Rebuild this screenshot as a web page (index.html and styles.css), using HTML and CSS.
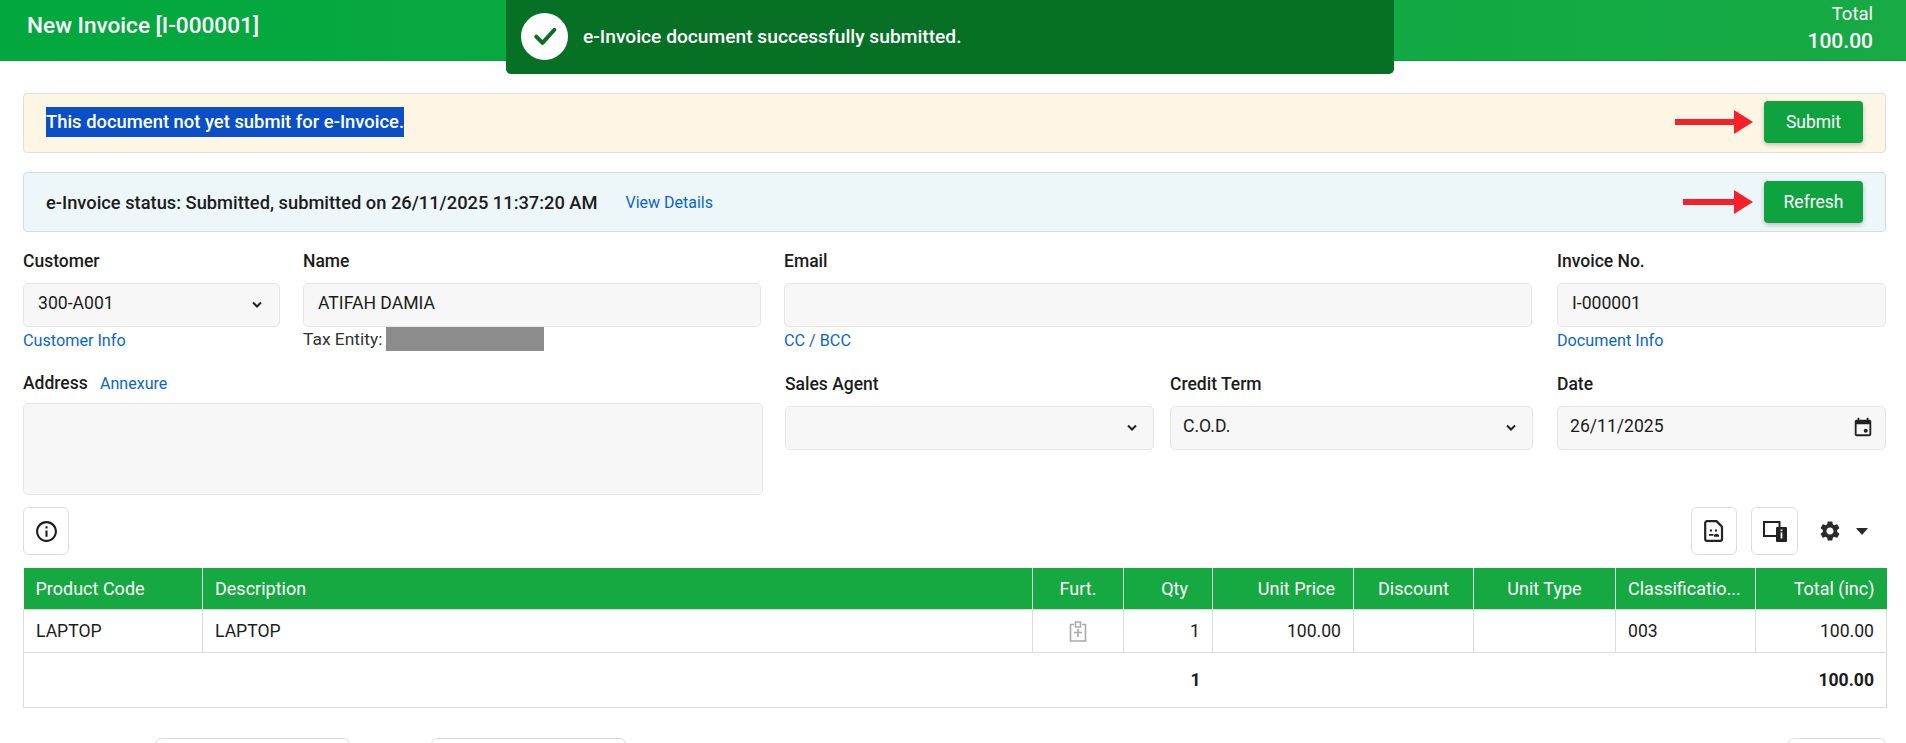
FILE: index.html
```html
<!DOCTYPE html>
<html lang="en">
<head>
  <meta charset="UTF-8">
  <meta name="viewport" content="width=device-width, initial-scale=1.0">
  <title>New Invoice</title>
  <link rel="stylesheet" href="styles.css">
</head>
<body>
  <header class="topbar">
    <h1>New Invoice [I-000001]</h1>
    <div class="topbar-total">
      <span>Total</span>
      <strong>100.00</strong>
    </div>
  </header>

  <div class="toast">
    <span class="toast-icon">
      <svg viewBox="0 0 24 24" width="30" height="30"><path d="M5 12.5l5 5L19.5 7" fill="none" stroke="#0a6f24" stroke-width="3.2" stroke-linecap="round" stroke-linejoin="round"/></svg>
    </span>
    <span>e-Invoice document successfully submitted.</span>
  </div>

  <div class="main-content">
    <div class="notice notice-warn">
      <span class="selected">This document not yet submit for e-Invoice.</span>
      <div class="notice-action action-up">
        <svg class="arrow arrow-long" viewBox="0 0 78 26"><path d="M0 10h59V1l19 12-19 12v-9H0z" fill="#f5202a"/></svg>
        <button class="btn" type="button">Submit</button>
      </div>
    </div>

    <div class="notice notice-info">
      <div class="status">
        <span>e-Invoice status: Submitted, submitted on 26/11/2025 11:37:20 AM</span>
        <a href="#" class="link">View Details</a>
      </div>
      <div class="notice-action">
        <svg class="arrow arrow-short" viewBox="0 0 70 26"><path d="M0 10h51V1l19 12-19 12v-9H0z" fill="#f5202a"/></svg>
        <button class="btn" type="button">Refresh</button>
      </div>
    </div>

    <form class="invoice-form">
      <div class="form-row form-row-top">
        <div class="field w-customer">
          <label>Customer</label>
          <div class="control">300-A001
            <svg class="chev chev-first" viewBox="0 0 12 8"><path d="M2 1.5l4 4 4-4" fill="none" stroke="#222" stroke-width="2"/></svg>
          </div>
          <a href="#" class="link under">Customer Info</a>
        </div>
        <div class="field w-name">
          <label>Name</label>
          <div class="control">ATIFAH DAMIA</div>
          <div class="under tax">Tax Entity:<span class="redacted"></span></div>
        </div>
        <div class="field w-email">
          <label>Email</label>
          <div class="control"></div>
          <a href="#" class="link under">CC / BCC</a>
        </div>
        <div class="field w-invoice">
          <label>Invoice No.</label>
          <div class="control">I-000001</div>
          <a href="#" class="link under">Document Info</a>
        </div>
      </div>

      <div class="form-row form-row-bottom">
        <div class="field w-address">
          <label class="address-label">Address <a href="#" class="link annexure">Annexure</a></label>
          <div class="control textarea"></div>
        </div>
        <div class="field w-agent">
          <label>Sales Agent</label>
          <div class="control tight">
            <svg class="chev" viewBox="0 0 12 8"><path d="M2 1.5l4 4 4-4" fill="none" stroke="#222" stroke-width="2"/></svg>
          </div>
        </div>
        <div class="field w-term">
          <label>Credit Term</label>
          <div class="control tight">C.O.D.
            <svg class="chev" viewBox="0 0 12 8"><path d="M2 1.5l4 4 4-4" fill="none" stroke="#222" stroke-width="2"/></svg>
          </div>
        </div>
        <div class="field w-invoice">
          <label>Date</label>
          <div class="control tight">26/11/2025
            <svg class="cal" viewBox="0 0 24 24"><path d="M19 4h-1V2h-2v2H8V2H6v2H5c-1.1 0-2 .9-2 2v14c0 1.1.9 2 2 2h14c1.1 0 2-.9 2-2V6c0-1.1-.9-2-2-2zm0 16H5V9h14v11z" fill="#222"/><circle cx="15" cy="16" r="2.2" fill="#222"/></svg>
          </div>
        </div>
      </div>
    </form>

    <div class="toolbar">
      <button class="icon-btn" type="button">
        <svg viewBox="0 0 24 24" width="25" height="25"><path d="M11 7h2v2h-2zm0 4h2v6h-2zm1-9C6.48 2 2 6.48 2 12s4.48 10 10 10 10-4.48 10-10S17.52 2 12 2zm0 18c-4.41 0-8-3.59-8-8s3.59-8 8-8 8 3.59 8 8-3.59 8-8 8z" fill="#1c1c1c"/></svg>
      </button>
      <div class="toolbar-right">
        <button class="icon-btn" type="button">
          <svg viewBox="0 0 20 22" width="20" height="22"><path d="M3 1.2h9.5L18 6.7V19a1.8 1.8 0 0 1-1.8 1.8H3A1.8 1.8 0 0 1 1.2 19V3A1.8 1.8 0 0 1 3 1.2z" fill="none" stroke="#222" stroke-width="2.2"/><path d="M6 9.5h2v2H6zM11 9.5h2v2h-2zM5 14h4.5v1.8H5zM10 15c1.5-1.6 3-1.6 5 0v1.8h-5z" fill="#222"/></svg>
        </button>
        <button class="icon-btn icon-btn-wide" type="button">
          <svg viewBox="0 0 24 21" width="24" height="21"><path d="M1 1h15.5v14H1z" fill="none" stroke="#222" stroke-width="2"/><path d="M13 6h11v15H13z" fill="#fff"/><path d="M14 6h9a1 1 0 0 1 1 1v13a1 1 0 0 1-1 1h-9a1 1 0 0 1-1-1V7a1 1 0 0 1 1-1z" fill="#222"/><path d="M17.6 8.5h1.8v1.8h-1.8zM17.6 11.5h1.8v6h-1.8z" fill="#fff"/></svg>
        </button>
        <div class="settings">
          <svg viewBox="0 0 24 24" width="24" height="24"><path d="M19.14 12.94c.04-.3.06-.61.06-.94 0-.32-.02-.64-.07-.94l2.03-1.58c.18-.14.23-.41.12-.61l-1.92-3.32c-.12-.22-.37-.29-.59-.22l-2.39.96c-.5-.38-1.03-.7-1.62-.94l-.36-2.54c-.04-.24-.24-.41-.48-.41h-3.84c-.24 0-.43.17-.47.41l-.36 2.54c-.59.24-1.13.57-1.62.94l-2.39-.96c-.22-.08-.47 0-.59.22L2.74 8.87c-.12.21-.08.47.12.61l2.03 1.58c-.05.3-.09.63-.09.94s.02.64.07.94l-2.03 1.58c-.18.14-.23.41-.12.61l1.92 3.32c.12.22.37.29.59.22l2.39-.96c.5.38 1.03.7 1.62.94l.36 2.54c.05.24.24.41.48.41h3.84c.24 0 .44-.17.47-.41l.36-2.54c.59-.24 1.13-.56 1.62-.94l2.39.96c.22.08.47 0 .59-.22l1.92-3.32c.12-.22.07-.47-.12-.61l-2.01-1.58zM12 15.6c-1.98 0-3.6-1.62-3.6-3.6s1.62-3.6 3.6-3.6 3.6 1.62 3.6 3.6-1.62 3.6-3.6 3.6z" fill="#2a2a2a"/></svg>
          <span class="caret"></span>
        </div>
      </div>
    </div>

    <table class="items">
      <colgroup>
        <col class="c-code"><col class="c-desc"><col class="c-furt"><col class="c-qty"><col class="c-price"><col class="c-disc"><col class="c-type"><col class="c-class"><col class="c-total">
      </colgroup>
      <thead>
        <tr>
          <th>Product Code</th>
          <th>Description</th>
          <th class="mid">Furt.</th>
          <th class="num th-qty">Qty</th>
          <th class="num th-price">Unit Price</th>
          <th class="mid">Discount</th>
          <th class="mid">Unit Type</th>
          <th>Classificatio...</th>
          <th class="num">Total (inc)</th>
        </tr>
      </thead>
      <tbody>
        <tr>
          <td>LAPTOP</td>
          <td>LAPTOP</td>
          <td class="mid">
            <svg class="furt-icon" viewBox="0 0 24 24" width="24" height="24"><path d="M8 4.5H4.5V21h15V4.5H16" fill="none" stroke="#aaa" stroke-width="1.6"/><path d="M9.5 2h5v5h-5zM12 9v8M8 12.5h8" fill="none" stroke="#aaa" stroke-width="1.6"/></svg>
          </td>
          <td class="num">1</td>
          <td class="num">100.00</td>
          <td></td>
          <td></td>
          <td>003</td>
          <td class="num">100.00</td>
        </tr>
      </tbody>
      <tfoot>
        <tr>
          <td colspan="3"></td>
          <td class="num">1</td>
          <td colspan="4"></td>
          <td class="num">100.00</td>
        </tr>
      </tfoot>
    </table>

    <div class="footer-buttons">
      <button class="foot-btn foot-a" type="button"></button>
      <button class="foot-btn foot-b" type="button"></button>
      <button class="foot-btn foot-c" type="button"></button>
    </div>
  </div>
</body>
</html>
```

FILE: styles.css
```css
html, body {
  height: 100%;
  overflow: hidden;
}
body {
  font-family: Roboto, "Liberation Sans", sans-serif;
  font-size: 17px;
  margin: 0;
  padding: 0;
  color: #1c1c1c;
  background: #fff;
}
a {
  text-decoration: none;
}
.link {
  color: #0a66c8;
  font-size: 16px;
  font-weight: 400;
}

.topbar {
  height: 61px;
  box-sizing: border-box;
  display: flex;
  justify-content: space-between;
  padding: 0 33px 0 27px;
  color: white;
  background: linear-gradient(90deg, #02a83e, #17aa45);
  border-bottom: 1px solid #0f9a3c;
}
.topbar h1 {
  margin: 11px 0 0;
  font-size: 22.6px;
  line-height: 29px;
  font-weight: 500;
}
.topbar-total {
  display: flex;
  flex-direction: column;
  align-items: flex-end;
  padding-top: 3px;
  font-size: 18.5px;
  line-height: 22px;
}
.topbar-total strong {
  margin-top: 5px;
  font-size: 21px;
  font-weight: 500;
}

.toast {
  position: absolute;
  top: 0;
  left: 506px;
  width: 888px;
  height: 74px;
  box-sizing: border-box;
  display: flex;
  align-items: center;
  gap: 15px;
  padding: 0 0 2px 15px;
  color: white;
  font-size: 19.2px;
  font-weight: 500;
  background: #067025;
  border-radius: 0 0 5px 5px;
}
.toast-icon {
  width: 47px;
  height: 47px;
  border-radius: 50%;
  background: white;
  display: flex;
  align-items: center;
  justify-content: center;
}

.main-content {
  padding: 32px 20px 0 23px;
}
.notice {
  height: 60px;
  box-sizing: border-box;
  display: flex;
  align-items: center;
  justify-content: space-between;
  padding: 0 22px;
  border-radius: 4px;
  margin-bottom: 19px;
}
.notice-warn {
  background: #fdf6e4;
  border: 1px solid #e2dfd6;
}
.notice-info {
  background: #edf6f8;
  border: 1px solid #cfdee2;
}
.selected {
  background: #0b4fc6;
  color: white;
  font-size: 18.4px;
  font-weight: 500;
  line-height: 30px;
  display: inline-block;
  margin-bottom: 2px;
}
.status {
  display: flex;
  align-items: center;
  gap: 28px;
  font-size: 18.3px;
  font-weight: 500;
}
.notice-action {
  display: flex;
  align-items: center;
  gap: 11px;
}
.action-up {
  margin-bottom: 2px;
}
.arrow-long {
  width: 78px;
  height: 26px;
}
.arrow-short {
  width: 70px;
  height: 26px;
}
.btn {
  width: 99px;
  height: 42px;
  background: #0fa33f;
  color: white;
  border: none;
  border-radius: 4px;
  font: inherit;
  font-size: 17.5px;
  box-shadow: 0 2px 5px rgba(0,0,0,0.22);
}

.invoice-form {
  margin-top: -5px;
}
.form-row {
  display: flex;
  gap: 24px;
}
.form-row-top {
  height: 123px;
}
.field label {
  display: block;
  height: 30px;
  line-height: 30px;
  margin-bottom: 7px;
  font-size: 17.5px;
  font-weight: 500;
}
.field .address-label {
  height: 29px;
  line-height: 29px;
  margin-bottom: 5px;
}
.annexure {
  margin-left: 8px;
}
.control {
  position: relative;
  height: 44px;
  box-sizing: border-box;
  padding: 0 14px;
  line-height: 38px;
  background: #f7f7f7;
  border: 1px solid #e6e6e6;
  border-radius: 5px;
  font-size: 17.6px;
}
.tight {
  padding-left: 12px;
}
.textarea {
  height: 92px;
}
.chev {
  position: absolute;
  right: 15px;
  top: 17px;
  width: 12px;
  height: 8px;
}
.chev-first {
  right: 16px;
}
.cal {
  position: absolute;
  right: 11px;
  top: 9px;
  width: 22px;
  height: 22px;
}
.under {
  display: block;
  margin-top: 3px;
  line-height: 22px;
  font-size: 16.2px;
}
.tax {
  display: flex;
  gap: 4px;
  margin-top: 0;
  line-height: 24px;
  font-size: 17.4px;
  color: #333;
}
.redacted {
  display: inline-block;
  width: 158px;
  height: 24px;
  background: #8c8c8c;
}
.w-customer { width: 257px; }
.w-name { width: 458px; margin-left: -1px; }
.w-email { width: 748px; margin-left: -1px; }
.w-invoice { width: 329px; }
.w-address { width: 740px; }
.w-agent { width: 369px; margin-left: -2px; }
.w-term { width: 363px; margin-left: -8px; }
.form-row-top .w-invoice { margin-left: 1px; }
.form-row-bottom .w-invoice { margin-left: 0; }

.toolbar {
  display: flex;
  justify-content: space-between;
  margin-top: 12px;
}
.toolbar-right {
  display: flex;
  align-items: center;
  gap: 14px;
}
.icon-btn {
  width: 46px;
  height: 48px;
  padding: 0;
  display: flex;
  align-items: center;
  justify-content: center;
  background: white;
  border: 1px solid #dedede;
  border-radius: 6px;
}
.icon-btn-wide {
  width: 47px;
}
.settings {
  display: flex;
  align-items: center;
  gap: 14px;
  margin-left: 6px;
  padding-right: 18px;
}
.caret {
  width: 0;
  height: 0;
  border-left: 6px solid transparent;
  border-right: 6px solid transparent;
  border-top: 7px solid #2a2a2a;
}

.items {
  width: 1863px;
  margin-top: 13px;
  border-collapse: collapse;
  table-layout: fixed;
  font-size: 17.6px;
}
.c-code { width: 179px; }
.c-desc { width: 830px; }
.c-furt { width: 91px; }
.c-qty { width: 89px; }
.c-price { width: 141px; }
.c-disc { width: 120px; }
.c-type { width: 142px; }
.c-class { width: 140px; }
.c-total { width: 131px; }
.items th, .items td {
  padding: 0 12px;
  text-align: left;
  white-space: nowrap;
  overflow: hidden;
}
.items th {
  height: 41px;
  background: #16a941;
  color: white;
  font-weight: 400;
  font-size: 18px;
  border-right: 1px solid #d9efe0;
}
.items th:last-child {
  border-right: none;
}
.items th.th-qty {
  padding-right: 24px;
}
.items th.th-price {
  padding-right: 18px;
}
.items tbody td {
  height: 42px;
  border: 1px solid #dcdcdc;
}
.items tfoot td {
  height: 54px;
  font-weight: 700;
  border-bottom: 1px solid #dcdcdc;
}
.items tfoot td:first-child {
  border-left: 1px solid #dcdcdc;
}
.items tfoot td:last-child {
  border-right: 1px solid #dcdcdc;
}
.items .num {
  text-align: right;
}
.items .mid {
  text-align: center;
}
.furt-icon {
  display: block;
  margin: 2px auto 0;
}

.footer-buttons {
  display: flex;
  margin-top: 30px;
}
.foot-btn {
  height: 40px;
  background: white;
  border: 1px solid #dedede;
  border-radius: 6px;
}
.foot-a {
  width: 195px;
  margin-left: 132px;
}
.foot-b {
  width: 195px;
  margin-left: 81px;
}
.foot-c {
  width: 98px;
  margin-left: auto;
}
```
